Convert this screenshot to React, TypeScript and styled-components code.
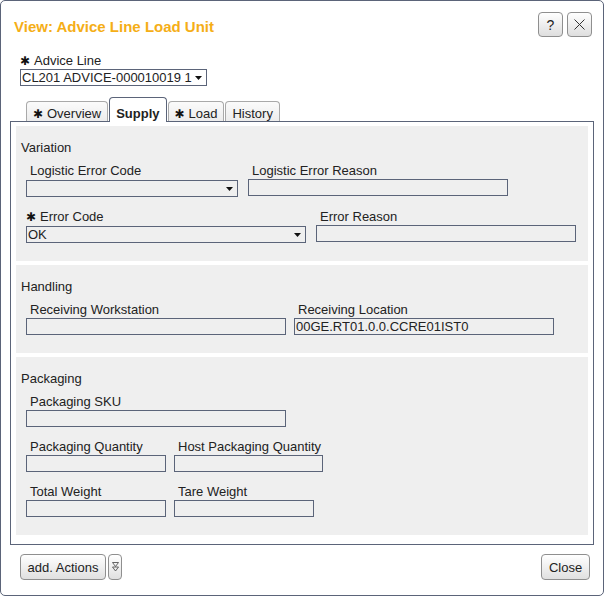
import React from "react";
import styled, { createGlobalStyle } from "styled-components";

const GlobalStyle = createGlobalStyle`
  html, body { margin: 0; padding: 0; background: #fff; }
  body {
    font-family: "Liberation Sans", Arial, sans-serif;
    font-size: 13px;
    color: #222;
  }
  * { box-sizing: border-box; }
`;

const Dialog = styled.div`
  width: 604px;
  height: 596px;
  border: 1px solid #5b6479;
  border-radius: 5px;
  background: #fff;
  display: flex;
  flex-direction: column;
  overflow: hidden;
`;

const Header = styled.div`
  display: flex;
  justify-content: space-between;
  align-items: flex-start;
  padding: 11px 11px 0 13px;
  height: 36px;
`;

const Title = styled.h1`
  margin: 6px 0 0;
  font-size: 15px;
  line-height: 18px;
  font-weight: bold;
  color: #f5ae17;
`;

const HeaderButtons = styled.div`
  display: flex;
  gap: 4px;
`;

const IconButton = styled.button`
  width: 25px;
  height: 25px;
  padding: 0;
  border: 1px solid #8f8f8f;
  border-radius: 4px;
  background: linear-gradient(#ffffff, #dedede);
  display: flex;
  align-items: center;
  justify-content: center;
  font-family: "Liberation Sans", Arial, sans-serif;
  font-size: 14px;
  color: #222;
`;

const TopField = styled.div`
  margin-top: 16px;
  padding-left: 19px;
  display: flex;
  flex-direction: column;
`;

const Star = styled.span`
  display: inline-block;
  width: 10px;
  margin-right: 4px;
  font-family: "DejaVu Sans", sans-serif;
  font-size: 12px;
  line-height: 10px;
  text-align: center;
  color: #111;
`;

const Label = styled.div<{ $required?: boolean }>`
  line-height: 16px;
  height: 16px;
  padding-left: ${(p) => (p.$required ? "0" : "4px")};
  white-space: nowrap;
`;

const TopLabel = styled(Label)`
  padding-left: 0;
`;

const SelectBox = styled.div<{ $w: number }>`
  width: ${(p) => p.$w}px;
  height: 17px;
  margin-top: 1px;
  border: 1px solid #5b6479;
  background: transparent;
  display: flex;
  align-items: center;
  justify-content: space-between;
  padding: 0 4px 0 1px;
  line-height: 15px;
  white-space: nowrap;
`;

const TopSelect = styled(SelectBox)`
  margin-top: 0;
  background: #fff;
`;

const Caret = () => (
  <svg width="7" height="4" viewBox="0 0 7 4">
    <polygon points="0,0 7,0 3.5,4" fill="#111" />
  </svg>
);

const TextBox = styled.div<{ $w: number }>`
  width: ${(p) => p.$w}px;
  height: 17px;
  border: 1px solid #5b6479;
  padding: 0 1px;
  line-height: 15px;
  white-space: nowrap;
`;

const TabStrip = styled.div`
  margin: 11px 0 -1px 25px;
  height: 25px;
  display: flex;
  align-items: flex-end;
  gap: 1px;
  position: relative;
  z-index: 1;
`;

const Tab = styled.div<{ $active?: boolean }>`
  height: ${(p) => (p.$active ? "25px" : "20px")};
  margin-bottom: ${(p) => (p.$active ? "0" : "1px")};
  padding: ${(p) => (p.$active ? "8px" : "4px")} 6px 0;
  border: 1px solid ${(p) => (p.$active ? "#5b6479" : "#a9a9a9")};
  border-bottom: none;
  border-radius: 4px 4px 0 0;
  background: ${(p) => (p.$active ? "#fff" : "linear-gradient(#fbfbfb, #ececec)")};
  font-weight: ${(p) => (p.$active ? "bold" : "normal")};
  line-height: 16px;
  white-space: nowrap;
  overflow: hidden;
`;

const Panel = styled.div`
  margin-left: 9px;
  width: 584px;
  height: 424px;
  border: 1px solid #5b6479;
  padding: 4px 5px 0;
  display: flex;
  flex-direction: column;
  gap: 4px;
`;

const Section = styled.div`
  background: #efefef;
  padding: 14px 10px 18px;
  display: flex;
  flex-direction: column;
`;

const SectionTitle = styled.div`
  margin-left: -5px;
  line-height: 16px;
  margin-bottom: 7px;
`;

const Rows = styled.div`
  display: flex;
  flex-direction: column;
  gap: 12px;
`;

const Row = styled.div<{ $gap: number }>`
  display: flex;
  gap: ${(p) => p.$gap}px;
`;

const Field = styled.div`
  display: flex;
  flex-direction: column;
`;

const Footer = styled.div`
  margin-top: 9px;
  padding: 0 13px 0 19px;
  display: flex;
  justify-content: space-between;
  align-items: flex-start;
`;

const ButtonGroup = styled.div`
  display: flex;
  gap: 2px;
`;

const Button = styled.button<{ $w?: number }>`
  height: 26px;
  width: ${(p) => (p.$w ? `${p.$w}px` : "auto")};
  padding: 0 6px;
  border: 1px solid #8f8f8f;
  border-radius: 4px;
  background: linear-gradient(#ffffff, #e0e0e0);
  font-family: "Liberation Sans", Arial, sans-serif;
  font-size: 13px;
  color: #222;
  display: flex;
  align-items: center;
  justify-content: center;
`;

const MenuButton = styled(Button)`
  padding: 0;
`;

type FieldDef = {
  label: string;
  w: number;
  select?: boolean;
  required?: boolean;
  value?: string;
};

const FormField = ({ f }: { f: FieldDef }) => (
  <Field>
    <Label $required={f.required}>
      {f.required && <Star>✱</Star>}
      {f.label}
    </Label>
    {f.select ? (
      <SelectBox $w={f.w}>
        <span>{f.value ?? ""}</span>
        <Caret />
      </SelectBox>
    ) : (
      <TextBox $w={f.w}>{f.value ?? ""}</TextBox>
    )}
  </Field>
);

type SectionDef = {
  title: string;
  rows: { gap: number; fields: FieldDef[] }[];
};

const sections: SectionDef[] = [
  {
    title: "Variation",
    rows: [
      {
        gap: 10,
        fields: [
          { label: "Logistic Error Code", w: 212, select: true },
          { label: "Logistic Error Reason", w: 260 },
        ],
      },
      {
        gap: 10,
        fields: [
          { label: "Error Code", w: 280, select: true, required: true, value: "OK" },
          { label: "Error Reason", w: 260 },
        ],
      },
    ],
  },
  {
    title: "Handling",
    rows: [
      {
        gap: 8,
        fields: [
          { label: "Receiving Workstation", w: 260 },
          { label: "Receiving Location", w: 260, value: "00GE.RT01.0.0.CCRE01IST0" },
        ],
      },
    ],
  },
  {
    title: "Packaging",
    rows: [
      { gap: 8, fields: [{ label: "Packaging SKU", w: 260 }] },
      {
        gap: 8,
        fields: [
          { label: "Packaging Quantity", w: 140 },
          { label: "Host Packaging Quantity", w: 149 },
        ],
      },
      {
        gap: 8,
        fields: [
          { label: "Total Weight", w: 140 },
          { label: "Tare Weight", w: 140 },
        ],
      },
    ],
  },
];

const tabs = [
  { label: "Overview", required: true },
  { label: "Supply", active: true },
  { label: "Load", required: true },
  { label: "History" },
];

export default function App() {
  return (
    <>
      <GlobalStyle />
      <Dialog>
        <Header>
          <Title>View: Advice Line Load Unit</Title>
          <HeaderButtons>
            <IconButton>?</IconButton>
            <IconButton>
              <svg width="11" height="11" viewBox="0 0 11 11">
                <path d="M0.5 0.5 L10.5 10.5 M10.5 0.5 L0.5 10.5" stroke="#333" strokeWidth="1" />
              </svg>
            </IconButton>
          </HeaderButtons>
        </Header>

        <TopField>
          <TopLabel>
            <Star>✱</Star>Advice Line
          </TopLabel>
          <TopSelect $w={187}>
            <span>CL201 ADVICE-000010019 1</span>
            <Caret />
          </TopSelect>
        </TopField>

        <TabStrip>
          {tabs.map((t) => (
            <Tab key={t.label} $active={t.active}>
              {t.required && <Star>✱</Star>}
              {t.label}
            </Tab>
          ))}
        </TabStrip>

        <Panel>
          {sections.map((s) => (
            <Section key={s.title}>
              <SectionTitle>{s.title}</SectionTitle>
              <Rows>
                {s.rows.map((r, i) => (
                  <Row key={i} $gap={r.gap}>
                    {r.fields.map((f) => (
                      <FormField key={f.label} f={f} />
                    ))}
                  </Row>
                ))}
              </Rows>
            </Section>
          ))}
        </Panel>

        <Footer>
          <ButtonGroup>
            <Button $w={86}>add. Actions</Button>
            <MenuButton $w={14}>
              <svg width="7" height="10" viewBox="0 0 7 10">
                <path d="M0.5 0.5 H6.5 L3.5 4.5 Z M0.5 5 H6.5 L3.5 9 Z" fill="none" stroke="#555" strokeWidth="0.9" />
              </svg>
            </MenuButton>
          </ButtonGroup>
          <Button $w={49}>Close</Button>
        </Footer>
      </Dialog>
    </>
  );
}
